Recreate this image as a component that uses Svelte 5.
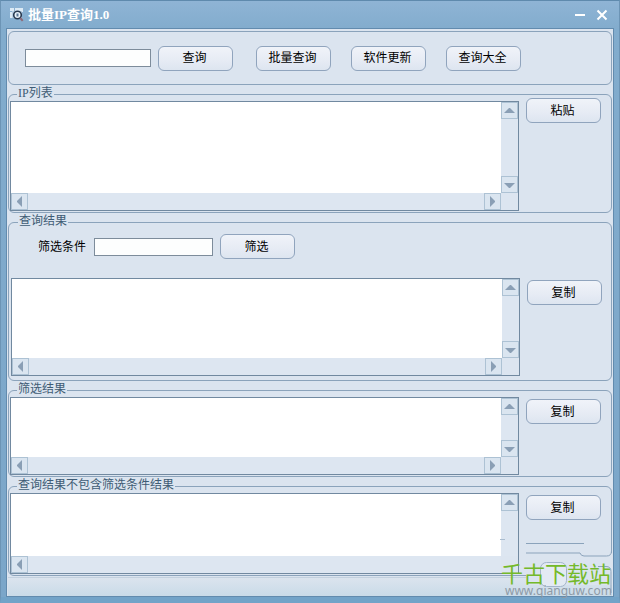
<script>
  let address = $state('');
  let condition = $state('');
  let tools = ['批量查询', '软件更新', '查询大全'];
</script>

{#snippet arrow(dir)}
  <svg width="15" height="15" viewBox="0 0 15 15" aria-hidden="true">
    {#if dir === 'up'}<path d="M2 10h11L8 5H7z" />
    {:else if dir === 'down'}<path d="M2 6h11l-5 5H7z" />
    {:else if dir === 'left'}<path d="M10 2v11L5 8V7z" />
    {:else}<path d="M5 2v11l5-5V7z" />{/if}
  </svg>
{/snippet}

{#snippet box(label, size, clipped)}
  <div class="box {size}">
    <textarea aria-label={label}></textarea>
    <div class="vbar">
      <button class="step" aria-label="向上滚动">{@render arrow('up')}</button>
      {#if !clipped}
        <button class="step" aria-label="向下滚动">{@render arrow('down')}</button>
      {/if}
    </div>
    <div class="hbar">
      <button class="step" aria-label="向左滚动">{@render arrow('left')}</button>
      {#if !clipped}
        <button class="step" aria-label="向右滚动">{@render arrow('right')}</button>
      {/if}
    </div>
    <div class="corner"></div>
  </div>
{/snippet}

<div class="window">
  <header>
    <svg class="logo" width="14" height="14" viewBox="0 0 14 14" aria-hidden="true">
      <path d="M0 0h4v3H0zM5 0h8v4H5zM0 4h3v6H0z" fill="#dceaf5" />
      <path d="M2 3h10v7H2z" fill="#b9d0e4" />
      <circle cx="7.5" cy="7" r="3.8" fill="#e8f2fa" stroke="#26384f" stroke-width="1.6" />
      <path d="M6.500 5.500h2v3h-2z" fill="#5d7896" />
      <path d="M10.300 10l2.400 2.800" stroke="#8d6a78" stroke-width="2" />
    </svg>
    <h1>批量IP查询1.0</h1>
    <button class="sys" aria-label="最小化">
      <svg width="12" height="12" viewBox="0 0 12 12"><path d="M1 6h10" /></svg>
    </button>
    <button class="sys" aria-label="关闭">
      <svg width="12" height="12" viewBox="0 0 12 12"><path d="M1.500 1.500l9 9M10.500 1.500l-9 9" /></svg>
    </button>
  </header>

  <main>
    <section class="toolbar">
      <input class="address" type="text" aria-label="IP地址" bind:value={address} />
      <button class="btn">查询</button>
      <div class="tools">
        {#each tools as tool}
          <button class="btn">{tool}</button>
        {/each}
      </div>
    </section>

    <fieldset>
      <legend>IP列表</legend>
      <div class="row raised">
        {@render box('IP列表', 'tall', false)}
        <button class="btn">粘贴</button>
      </div>
    </fieldset>

    <fieldset class="results">
      <legend>查询结果</legend>
      <div class="filter">
        <label for="condition">筛选条件</label>
        <input id="condition" type="text" bind:value={condition} />
        <button class="btn">筛选</button>
      </div>
      <div class="row">
        {@render box('查询结果', 'medium', false)}
        <button class="btn">复制</button>
      </div>
    </fieldset>

    <fieldset>
      <legend>筛选结果</legend>
      <div class="row">
        {@render box('筛选结果', 'short', false)}
        <button class="btn">复制</button>
      </div>
    </fieldset>

    <fieldset>
      <legend>查询结果不包含筛选条件结果</legend>
      <div class="row">
        {@render box('查询结果不包含筛选条件结果', 'last', true)}
        <button class="btn">复制</button>
      </div>
    </fieldset>

    <footer></footer>
  </main>

  <div class="stamp">
    <svg width="113" height="60" viewBox="0 0 113 60" aria-hidden="true">
      <path d="M26 16h87v32H26z" fill="#dbe4ef" />
      <path d="M0 2.500h5" stroke="#a9bccf" />
      <g fill="none" stroke="#8ba3bb">
        <path d="M111.500 0v14q0 5-5 5H84q-3 0-4-3H26M26 6.500h58" />
        <path d="M98 29.500h8q5 0 5 5V56" />
        <rect x="40.500" y="25.500" width="26" height="24" rx="6" fill="#e3eaf3" stroke="#a3b5ca" />
      </g>
    </svg>
    <strong>千古下载站</strong>
    <span>www.qianguw.com</span>
  </div>
</div>

<style>
  :global(body) {
    margin: 0;
    background: #7ba8cb;
  }
  .window {
    position: relative;
    box-sizing: border-box;
    min-height: 100vh;
    padding: 0 6px;
    display: flex;
    flex-direction: column;
    background: linear-gradient(#8fb4d5, #82accd 28px, #7ba6c9);
    border: 1px solid #6c94b5;
    border-top-color: #5f8aad;
    border-bottom: 6px solid #72a3c8;
    font: 12px/14px "Liberation Serif", "Noto Sans CJK SC", sans-serif;
    color: #000;
  }
  header {
    height: 27px;
    display: flex;
    align-items: center;
    padding: 0 2px 0 3px;
    gap: 4px;
  }
  h1 {
    flex: 1;
    margin: 0;
    font-size: 13px;
    line-height: 16px;
    font-weight: bold;
    color: #fff;
  }
  .sys {
    width: 18px;
    height: 18px;
    padding: 0;
    border: 0;
    background: none;
    display: grid;
    place-items: center;
  }
  .sys path {
    stroke: #fff;
    stroke-width: 2;
    fill: none;
  }
  main {
    flex: 1;
    display: flex;
    flex-direction: column;
    gap: 3px;
    padding: 2px 1px 0;
    border: 1px solid #628bae;
    border-width: 1px 0;
    box-shadow: -1px 0 #628bae, 1px 0 #628bae;
    background: #dbe4ef;
  }
  .toolbar {
    display: flex;
    align-items: center;
    gap: 7px;
    height: 52px;
    padding-left: 16px;
    border: 1px solid #8ba3bb;
    border-radius: 6px;
  }
  .tools {
    display: flex;
    gap: 20px;
    margin-left: 16px;
  }
  input {
    box-sizing: border-box;
    width: 119px;
    height: 18px;
    padding: 0 3px;
    border: 1px solid #7d8c9b;
    border-radius: 0;
    background: #fdfefe;
    font: inherit;
  }
  .address {
    width: 126px;
  }
  .btn {
    box-sizing: border-box;
    flex: none;
    width: 75px;
    height: 25px;
    padding: 0 2px 0 0;
    border: 1px solid #90a4bd;
    border-radius: 6px;
    background: linear-gradient(#f0f3f9, #e6ebf4 60%, #dde5f0);
    font: inherit;
    color: #000;
  }
  fieldset {
    min-width: 0;
    margin: 0;
    padding: 0 10px 1px 1px;
    border: 1px solid #8ba3bb;
    border-radius: 6px;
  }
  .results {
    padding: 0 9px 4px 2px;
  }
  legend {
    margin-left: 7px;
    padding: 0 1px 2px;
    line-height: 11px;
    color: #3f5c75;
  }
  .row {
    display: flex;
    align-items: flex-start;
    gap: 7px;
  }
  .row > .btn {
    margin-top: 2px;
  }
  .raised > .btn {
    margin-top: -3px;
  }
  .filter {
    display: flex;
    align-items: center;
    gap: 7px;
    height: 25px;
    padding: 5px 0 19px 27px;
  }
  .filter label {
    width: 49px;
  }
  .box {
    box-sizing: border-box;
    flex: 1;
    min-width: 0;
    display: grid;
    grid-template: 1fr 17px / 1fr 17px;
    border: 1px solid #7189a0;
    background: #dce5f0;
  }
  .tall {
    height: 110px;
  }
  .medium {
    height: 98px;
  }
  .short {
    height: 78px;
  }
  .last {
    height: 81px;
  }
  textarea {
    box-sizing: border-box;
    width: 100%;
    height: 100%;
    min-height: 0;
    padding: 2px 4px;
    border: 0;
    resize: none;
    overflow: hidden;
    background: #fff;
    font: inherit;
  }
  .vbar,
  .hbar {
    display: flex;
    justify-content: space-between;
    background: #dde6f1;
  }
  .vbar {
    flex-direction: column;
  }
  .step {
    box-sizing: border-box;
    width: 17px;
    height: 17px;
    padding: 0;
    border: 1px solid #adc2d4;
    background: #dae5f0;
  }
  .step svg {
    display: block;
  }
  .step path {
    fill: #8a9fb5;
  }
  footer {
    flex: 1;
    margin-top: -2px;
    border-top: 1px solid #c3d1df;
    background: linear-gradient(#dbe4ee, #c9dbe8);
  }
  .stamp {
    position: absolute;
    box-sizing: border-box;
    right: 6px;
    bottom: -2px;
    width: 113px;
    height: 62px;
    padding-bottom: 2px;
    display: flex;
    flex-direction: column;
    justify-content: flex-end;
    pointer-events: none;
  }
  .stamp svg {
    position: absolute;
    left: 0;
    top: 0;
  }
  .stamp strong {
    position: relative;
    padding-left: 1px;
    font: 22px/20px "Liberation Sans", "Noto Sans CJK SC", sans-serif;
    color: #74b92a;
  }
  .stamp span {
    position: relative;
    padding-left: 5px;
    font: 12px/12px "Noto Sans", sans-serif;
    color: #8e9aa6;
  }
</style>
